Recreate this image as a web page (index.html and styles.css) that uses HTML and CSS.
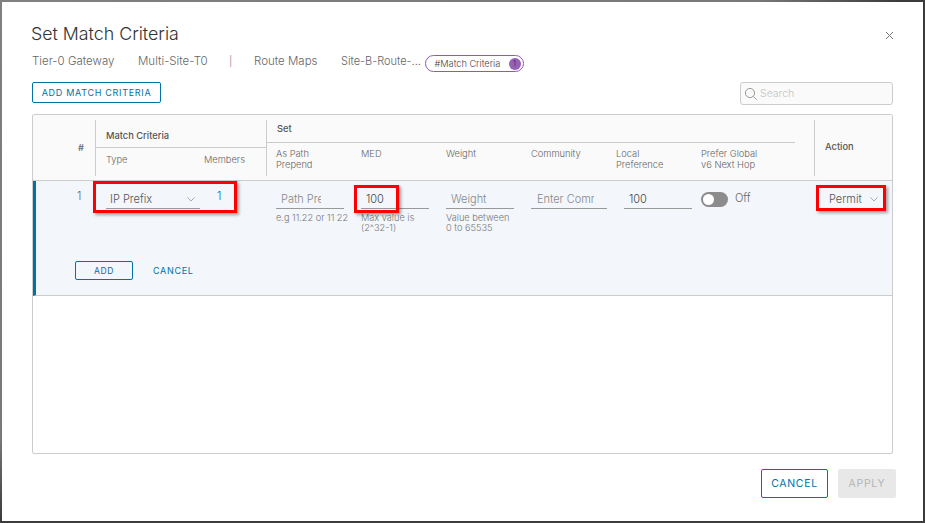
FILE: index.html
```html
<!DOCTYPE html>
<html lang="en">
<head>
<meta charset="utf-8">
<title>Set Match Criteria</title>
<link rel="stylesheet" href="styles.css">
</head>
<body>
<div class="modal">
  <header class="head">
    <h1 class="title">Set Match Criteria</h1>
    <svg class="close" width="9" height="9" viewBox="0 0 9 9"><path d="M1 1l7 7M8 1l-7 7" stroke="#777" stroke-width="1" fill="none"/></svg>
  </header>
  <nav class="crumbs">
    <span class="c1">Tier-0 Gateway</span>
    <span class="c2">Multi-Site-T0</span>
    <span class="c3">|</span>
    <span class="c4">Route Maps</span>
    <span class="c5">Site-B-Route-...</span>
    <span class="pill">#Match Criteria<b class="count">1</b></span>
  </nav>
  <div class="tools">
    <button class="btn add-criteria">ADD MATCH CRITERIA</button>
    <label class="search">
      <svg width="14" height="14" viewBox="0 0 14 14"><circle cx="6" cy="6" r="4.6" stroke="#999" fill="none"/><path d="M9.5 9.5l3.2 3.2" stroke="#999" fill="none"/></svg>
      <input class="search-input" placeholder="Search">
    </label>
  </div>
  <section class="table">
    <div class="thead">
      <div class="th-num">#</div>
      <div class="th-match">
        <div class="match-title">Match Criteria</div>
        <div class="match-sub"><span>Type</span><span>Members</span></div>
      </div>
      <div class="th-set">
        <div class="set-title">Set</div>
        <div class="set-sub">
          <span class="set-col">As Path<br>Prepend</span>
          <span class="set-col">MED</span>
          <span class="set-col">Weight</span>
          <span class="set-col">Community</span>
          <span class="set-col">Local<br>Preference</span>
          <span class="set-col">Prefer Global<br>v6 Next Hop</span>
        </div>
      </div>
      <div class="th-action">Action</div>
    </div>
    <div class="row">
      <span class="mark mark-type"></span>
      <span class="mark mark-med"></span>
      <span class="mark mark-action"></span>
      <div class="fields">
        <div class="f-num">1</div>
        <div class="f-match">
          <div class="select type-select"><span>IP Prefix</span><svg class="chev" width="8" height="5" viewBox="0 0 8 5"><path d="M.5 .5l3.5 3.5 3.5-3.5" stroke="#aaa" fill="none"/></svg></div>
          <span class="members">1</span>
        </div>
        <div class="f-set">
          <div class="set-col"><input class="inp path" placeholder="Path Prepend"><p class="hint nowrap">e.g 11.22 or 11 22</p></div>
          <div class="set-col"><input class="inp" value="100"><p class="hint">Max value is<br>(2^32-1)</p></div>
          <div class="set-col"><input class="inp" placeholder="Weight"><p class="hint">Value between<br>0 to 65535</p></div>
          <div class="set-col"><input class="inp wide" placeholder="Enter Community"></div>
          <div class="set-col local"><input class="inp" value="100"></div>
          <div class="set-col toggle-col"><span class="toggle"><i class="knob"></i></span><span class="off">Off</span></div>
        </div>
        <div class="f-action">
          <div class="select action-select"><span>Permit</span><svg class="chev" width="8" height="5" viewBox="0 0 8 5"><path d="M.5 .5l3.5 3.5 3.5-3.5" stroke="#aaa" fill="none"/></svg></div>
        </div>
      </div>
      <div class="row-actions">
        <button class="btn small">ADD</button>
        <button class="link">CANCEL</button>
      </div>
    </div>
  </section>
  <footer class="foot">
    <button class="btn big">CANCEL</button>
    <button class="btn big disabled">APPLY</button>
  </footer>
</div>
</body>
</html>
```
FILE: styles.css
```css
* { box-sizing: border-box; }
html, body { margin: 0; height: 100%; }
body {
  width: 925px;
  height: 523px;
  overflow: hidden;
  padding: 2px;
  background: linear-gradient(150deg, #808080 0, #787878 380px, #3c3c3c 450px);
  font-family: "Inter", "Liberation Sans", sans-serif;
  color: #666;
}
.modal {
  width: 921px;
  height: 519px;
  background: #fff;
  padding: 0 27px 0 30px;
  display: flex;
  flex-direction: column;
}
.head {
  display: flex;
  justify-content: space-between;
  align-items: center;
  height: 42px;
  padding-top: 20px;
}
.title { margin: 0 0 0 -1px; font-size: 17.8px; font-weight: 300; color: #333; }
.close { margin-right: 2px; margin-top: 5px; }
.crumbs {
  display: flex;
  align-items: center;
  height: 22px;
  margin-top: 6px;
  font-size: 11.5px;
  font-weight: 300;
  color: #666;
  white-space: nowrap;
}
.c1 { width: 106px; }
.c2 { width: 91px; }
.c3 { width: 25px; font-size: 10px; font-weight: 400; color: #999; }
.c4 { width: 87px; }
.c5 { width: 83.5px; font-size: 11px; }
.pill {
  display: flex;
  align-items: center;
  justify-content: space-between;
  width: 99px;
  height: 17px;
  margin-top: 5px;
  border: 1px solid #8e5bb0;
  border-radius: 9px;
  padding: 0 2px 0 9px;
  font-size: 9.2px;
  font-weight: 300;
  color: #444;
}
.count {
  width: 12px;
  height: 12px;
  border-radius: 50%;
  background: #9460b8;
  color: #4a2a60;
  font-size: 7px;
  font-weight: 400;
  text-align: center;
  line-height: 12px;
}
.tools {
  display: flex;
  justify-content: space-between;
  align-items: flex-start;
  width: 861px;
  margin-top: 10px;
}
.btn {
  font-family: inherit;
  background: #fff;
  border: 1px solid #0072a3;
  border-radius: 2px;
  color: #0072a3;
  font-weight: 400;
  letter-spacing: .7px;
  padding: 0;
}
.add-criteria { width: 129px; height: 21px; font-size: 9px; }
.search {
  display: flex;
  align-items: center;
  gap: 0;
  width: 153px;
  height: 23px;
  padding-left: 3px;
  background: #fafafa;
  border: 1px solid #ccc;
  border-radius: 3px;
}
.search-input {
  width: 120px;
  border: 0;
  background: none;
  font: 300 10.5px "Inter", sans-serif;
  outline: 0;
}
.search-input::placeholder { color: #c4c4c4; }
.table {
  width: 861px;
  height: 340px;
  margin-top: 9px;
  border: 1px solid #ccc;
  border-radius: 2px;
}
.thead {
  display: flex;
  height: 66px;
  background: #fafafa;
  border-bottom: 1px solid #ccc;
  font-size: 9.3px;
  font-weight: 300;
  color: #666;
  padding-top: 5px;
}
.th-num {
  width: 63px;
  height: 56px;
  padding: 22px 0 0 45px;
  font-weight: 500;
  border-right: 1px solid #ccc;
}
.th-match {
  width: 171px;
  height: 56px;
  border-right: 1px solid #ccc;
  display: flex;
  flex-direction: column;
}
.match-title {
  height: 28px;
  padding: 10px 0 0 10px;
  font-weight: 500;
  border-bottom: 1px solid #ccc;
  color: #555;
}
.match-sub {
  display: flex;
  justify-content: space-between;
  padding: 6px 21px 0 10px;
}
.th-set { width: 547px; height: 56px; display: flex; flex-direction: column; }
.set-title {
  width: 528px;
  height: 23px;
  padding: 3px 0 0 10px;
  font-weight: 500;
  border-bottom: 1px solid #ccc;
  color: #555;
}
.set-sub { display: flex; padding: 5px 0 0 9px; line-height: 11px; }
.set-col { width: 85px; flex: none; }
.th-action {
  flex: 1;
  height: 56px;
  border-left: 1px solid #ccc;
  padding: 21px 0 0 10px;
  font-weight: 500;
  color: #555;
}
.row {
  position: relative;
  height: 115px;
  background: #f3f6fa;
  border-left: 3px solid #0072a3;
  border-bottom: 1px solid #ccc;
}
.fields { display: flex; height: 76px; font-size: 11px; font-weight: 300; }
.f-num { width: 60px; padding: 8px 0 0 41px; color: #666; }
.f-match {
  width: 170px;
  display: flex;
  padding: 9px 0 0 10px;
}
.select {
  display: flex;
  justify-content: space-between;
  align-items: center;
  height: 19px;
  border-bottom: 1px solid #999;
  color: #555;
}
.type-select { width: 94px; padding: 0 5px 0 4px; }
.members { margin-left: 17px; margin-top: -1px; color: #0072a3; }
.f-set { display: flex; width: 548px; padding: 9px 0 0 10px; }
.inp {
  display: block;
  width: 68px;
  height: 19px;
  padding: 0 5px;
  border: 0;
  border-bottom: 1px solid #999;
  background: none;
  font: 300 11px "Inter", sans-serif;
  color: #444;
  outline: 0;
}
.inp::placeholder { color: #888; }
.inp.path { padding-right: 23px; }
.inp.wide { width: 76px; padding: 0 13px 0 6px; }
.local .inp { margin-left: 8px; }
.hint { margin: 4px 0 0; font-size: 9.2px; line-height: 10px; color: #777; }
.nowrap { white-space: nowrap; }
.toggle-col { display: flex; gap: 7px; }
.toggle {
  position: relative;
  width: 27px;
  height: 15px;
  margin-top: 2px;
  background: #8c8c8c;
  border-radius: 8px;
}
.knob {
  position: absolute;
  left: 2px;
  top: 2px;
  width: 11px;
  height: 11px;
  border-radius: 50%;
  background: #fff;
}
.off { margin-top: 1px; }
.f-action { flex: 1; padding: 9px 10px 0 10px; }
.action-select { padding: 0 4px 0 5px; }
.row-actions {
  display: flex;
  align-items: center;
  padding-left: 39px;
  margin-top: 4px;
}
.small { width: 58px; height: 19px; font-size: 8.5px; background: none; }
.link {
  margin-left: 20px;
  padding: 0;
  border: 0;
  background: none;
  font: 400 9px "Inter", sans-serif;
  letter-spacing: .7px;
  color: #0072a3;
}
.mark {
  position: absolute;
  border: 3px solid #f00;
  box-shadow: 2px 2px 3px rgba(0, 0, 0, .35);
}
.mark-type { left: 57px; top: 0; width: 144px; height: 32px; }
.mark-med { left: 318px; top: 4px; width: 45px; height: 28px; }
.mark-action { left: 780px; top: 4px; width: 70px; height: 26px; }
.foot {
  display: flex;
  justify-content: flex-end;
  gap: 10px;
  margin-top: 15px;
}
.big { height: 29px; font-size: 10.5px; }
.big:first-child { width: 67px; }
.disabled { width: 58px; border: 0; background: #e8e8e8; color: #b5b5b5; }
```
